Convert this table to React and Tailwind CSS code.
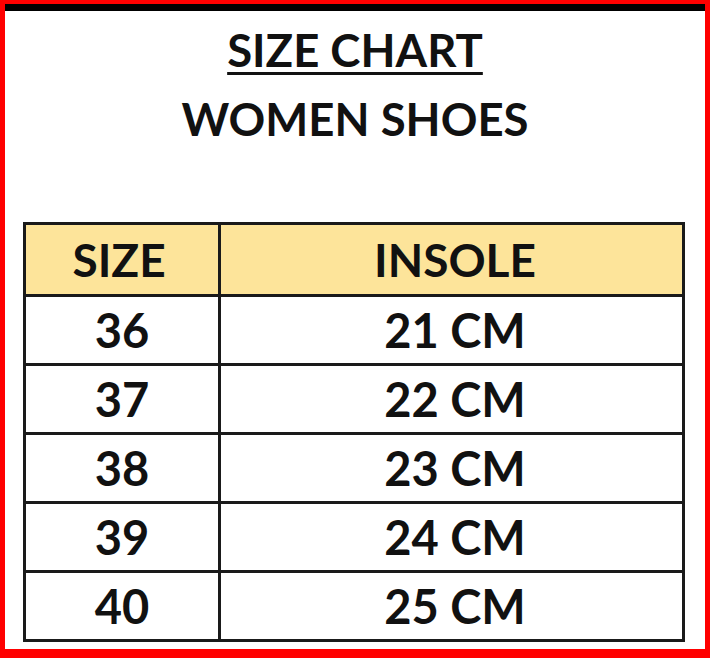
export default function App() {
  const rows = [
    ["36", "21 CM"],
    ["37", "22 CM"],
    ["38", "23 CM"],
    ["39", "24 CM"],
    ["40", "25 CM"],
  ];
  return (
    <div className="w-[710px] h-[658px] bg-[#ff0000] pl-[5px] pr-[5px] pt-[4px] pb-[9px]" style={{ fontFamily: "Lato, 'Open Sans', sans-serif" }}>
      <div className="w-full h-full bg-white border-t-[7px] border-black flex flex-col">
        <div className="flex flex-col items-center pt-[13px] text-[#111] font-bold">
          <div className="text-[45.5px] leading-[52px] underline decoration-[3px] underline-offset-[5px]">SIZE CHART</div>
          <div className="text-[45.5px] leading-[52px] mt-[17px]">WOMEN SHOES</div>
        </div>
        <div className="ml-[18px] mt-[77px] w-[662px] border-[3px] border-[#1a1a1a] text-[#111] font-bold">
          <div className="flex h-[72px] bg-[#fde49a] border-b-[3px] border-[#1a1a1a]">
            <div className="w-[195px] border-r-[3px] border-[#1a1a1a] flex items-center justify-center text-[46px] pr-[6px]">SIZE</div>
            <div className="flex-1 flex items-center justify-center text-[46px] pl-[7px]">INSOLE</div>
          </div>
          {rows.map(([s, c], i) => (
            <div key={s} className={i < rows.length - 1 ? "flex h-[69px] border-b-[3px] border-[#1a1a1a]" : "flex h-[66px]"}>
              <div className="w-[195px] border-r-[3px] border-[#1a1a1a] flex items-center justify-center text-[47px]">{s}</div>
              <div className="flex-1 flex items-center justify-center text-[47px] pl-[7px]">{c}</div>
            </div>
          ))}
        </div>
      </div>
    </div>
  );
}
